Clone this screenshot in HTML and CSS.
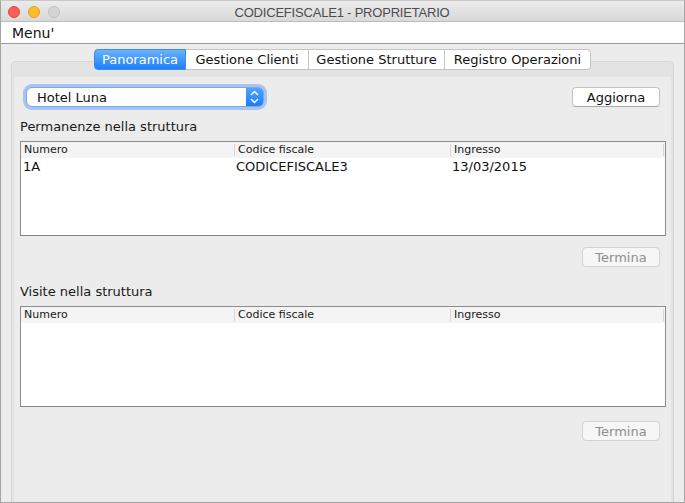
FILE: index.html
```
<!DOCTYPE html>
<html>
<head>
<meta charset="utf-8">
<link rel="stylesheet" href="styles.css">
</head>
<body>
<div class="window">
  <div class="titlebar">
    <div class="lights">
      <span class="light red"></span>
      <span class="light yellow"></span>
      <span class="light gray"></span>
    </div>
    <div class="title">CODICEFISCALE1 - PROPRIETARIO</div>
  </div>
  <div class="menubar"><span class="menu">Menu'</span></div>
  <div class="body">
    <div class="tabs">
      <div class="tab active t1">Panoramica</div>
      <div class="tab t2">Gestione Clienti</div>
      <div class="tab t3">Gestione Strutture</div>
      <div class="tab t4">Registro Operazioni</div>
    </div>
    <div class="pane">
      <div class="content">
        <div class="toprow">
          <div class="select">
            <span class="select-text">Hotel Luna</span>
            <span class="select-arrow">
              <svg width="9" height="14" viewBox="0 0 9 14"><path d="M1.5 4.5 L4.5 1.5 L7.5 4.5 M1.5 9.5 L4.5 12.5 L7.5 9.5" fill="none" stroke="#fff" stroke-width="1.5" stroke-linecap="round" stroke-linejoin="round"/></svg>
            </span>
          </div>
          <button class="btn">Aggiorna</button>
        </div>
        <div class="label l1">Permanenze nella struttura</div>
        <div class="table t-perm">
          <div class="thead">
            <div class="th">Numero</div>
            <div class="th">Codice fiscale</div>
            <div class="th">Ingresso</div>
          </div>
          <div class="tr">
            <div class="td">1A</div>
            <div class="td">CODICEFISCALE3</div>
            <div class="td">13/03/2015</div>
          </div>
        </div>
        <div class="btnrow b1"><button class="btn disabled">Termina</button></div>
        <div class="label l2">Visite nella struttura</div>
        <div class="table t-vis">
          <div class="thead">
            <div class="th">Numero</div>
            <div class="th">Codice fiscale</div>
            <div class="th">Ingresso</div>
          </div>
        </div>
        <div class="btnrow b2"><button class="btn disabled">Termina</button></div>
      </div>
    </div>
  </div>
</div>
</body>
</html>
```

FILE: styles.css
```
* { box-sizing: border-box; }
html, body { margin: 0; padding: 0; }
body {
  width: 685px;
  height: 503px;
  overflow: hidden;
  font-family: "DejaVu Sans", "Liberation Sans", sans-serif;
  color: #1a1a1a;
  background: #ececec;
}
.window {
  width: 685px;
  height: 503px;
  display: flex;
  flex-direction: column;
  border: 1px solid #a5a5a5;
  border-top-color: #c8c8c8;
  background: #ececec;
}
.titlebar {
  height: 21px;
  flex: none;
  display: flex;
  align-items: center;
  background: linear-gradient(#ebebeb, #d9d9d9);
  border-bottom: 1px solid #bdbdbd;
}
.lights {
  display: flex;
  gap: 8px;
  padding-left: 7px;
  padding-top: 1px;
}
.light {
  width: 12px;
  height: 12px;
  border-radius: 50%;
  display: block;
}
.red { background: #fc5f57; border: 1px solid #e2463f; }
.yellow { background: #fdbc2e; border: 1px solid #e1a116; }
.gray { background: #d4d4d4; border: 1px solid #c2c2c2; }
.title {
  flex: 1;
  text-align: center;
  margin-left: -60px;
  padding-top: 2px;
  font-family: "Liberation Sans", Arial, sans-serif;
  font-size: 13px;
  color: #4d4d4d;
  letter-spacing: -0.2px;
}
.menubar {
  height: 22px;
  flex: none;
  background: #ffffff;
  border-bottom: 1px solid #9d9d9d;
  display: flex;
  align-items: center;
  padding-left: 11px;
  padding-top: 1px;
}
.menu { font-size: 14px; color: #111; }
.body {
  flex: 1;
  display: flex;
  flex-direction: column;
  padding-top: 5px;
}
.tabs {
  display: flex;
  justify-content: center;
  height: 21px;
  margin-bottom: -9px;
  position: relative;
  z-index: 1;
}
.tab {
  font-size: 13px;
  line-height: 20px;
  height: 21px;
  text-align: center;
  background: #ffffff;
  border: 1px solid #c4c4c4;
  border-left: none;
  color: #111;
}
.t1 { width: 92px; border-radius: 4px 0 0 4px; border: 1px solid #3a8bf5; }
.t2 { width: 123px; }
.t3 { width: 136px; }
.t4 { width: 146px; border-radius: 0 4px 4px 0; }
.tab.active {
  background: linear-gradient(#6ab2fb, #1b80fa);
  color: #ffffff;
}
.pane {
  flex: 1;
  margin: 0 10px;
  background: #e3e3e3;
  border: 1px solid #d6d6d6;
  border-bottom: none;
  border-radius: 5px 5px 0 0;
  padding: 15px 2px 0 2px;
  display: flex;
  flex-direction: column;
}
.content {
  flex: 1;
  background: #ececec;
  padding: 8px 5px 0 6px;
  display: flex;
  flex-direction: column;
}
.toprow {
  display: flex;
  justify-content: space-between;
  align-items: center;
  padding: 0 6px 0 4px;
  height: 24px;
}
.select {
  display: flex;
  border-radius: 6px;
  box-shadow: 0 0 0 3px rgba(110, 165, 240, 0.55);
  border: 1px solid #7aa7e8;
  background: #ffffff;
  margin: 2px;
  height: 20px;
  width: 238px;
}
.select-text {
  flex: 1;
  font-size: 13px;
  line-height: 19px;
  padding-left: 10px;
  color: #111;
}
.select-arrow {
  width: 17px;
  background: linear-gradient(#52a4fc, #1a7ef9);
  border-radius: 0 4px 4px 0;
  display: flex;
  align-items: center;
  justify-content: center;
}
.btn {
  font-family: "DejaVu Sans", "Liberation Sans", sans-serif;
  font-size: 13px;
  height: 20px;
  padding: 0;
  background: #ffffff;
  border: 1px solid #c3c3c3;
  border-bottom-color: #a9a9a9;
  border-radius: 4px;
  color: #111;
  line-height: 17px;
  width: 88px;
}
.btn.disabled {
  width: 78px;
  background: #f6f6f6;
  border: 1px solid #d3d3d3;
  color: #8e8e8e;
}
.label {
  font-size: 13px;
  line-height: 16px;
  color: #1a1a1a;
}
.l1 { margin-top: 10px; }
.l2 { margin-top: 17px; }
.table {
  margin-top: 6px;
  background: #ffffff;
  border: 1px solid #8c8c8c;
  border-bottom-color: #858585;
}
.t-perm { height: 95px; }
.t-vis { height: 101px; }
.thead {
  display: grid;
  grid-template-columns: 214px 216px 213px 1fr;
  background: #f4f4f4;
  padding: 2px 0;
  height: 16px;
}
.th {
  font-size: 11px;
  line-height: 12px;
  height: 12px;
  border-right: 1px solid #d6d6d6;
  padding-left: 3px;
  color: #1a1a1a;
}
.tr {
  display: grid;
  grid-template-columns: 214px 216px 213px 1fr;
  height: 17px;
}
.td {
  font-size: 13px;
  line-height: 17px;
  padding-left: 2px;
  color: #111;
}
.td + .td { padding-left: 1px; }
.btnrow {
  display: flex;
  justify-content: flex-end;
  padding-right: 6px;
}
.b1 { margin-top: 11px; }
.b2 { margin-top: 14px; }
```
